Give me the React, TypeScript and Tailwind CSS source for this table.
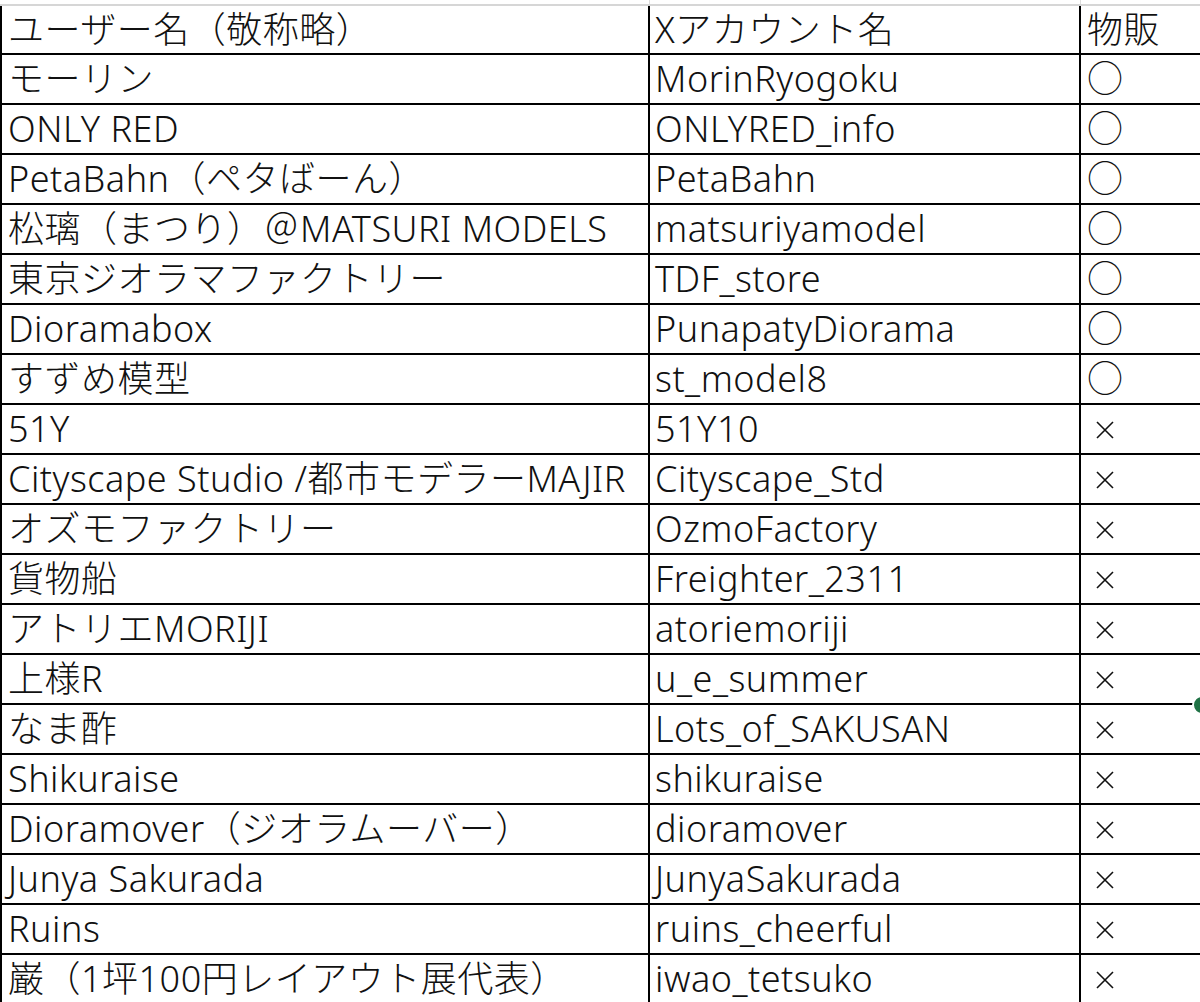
import React from "react";

const rows: [string, string, string][] = [
  ["モーリン", "MorinRyogoku", "○"],
  ["ONLY RED", "ONLYRED_info", "○"],
  ["PetaBahn（ペタばーん）", "PetaBahn", "○"],
  ["松璃（まつり）＠MATSURI MODELS", "matsuriyamodel", "○"],
  ["東京ジオラマファクトリー", "TDF_store", "○"],
  ["Dioramabox", "PunapatyDiorama", "○"],
  ["すずめ模型", "st_model8", "○"],
  ["51Y", "51Y10", "×"],
  ["Cityscape Studio /都市モデラーMAJIR", "Cityscape_Std", "×"],
  ["オズモファクトリー", "OzmoFactory", "×"],
  ["貨物船", "Freighter_2311", "×"],
  ["アトリエMORIJI", "atoriemoriji", "×"],
  ["上様R", "u_e_summer", "×"],
  ["なま酢", "Lots_of_SAKUSAN", "×"],
  ["Shikuraise", "shikuraise", "×"],
  ["Dioramover（ジオラムーバー）", "dioramover", "×"],
  ["Junya Sakurada", "JunyaSakurada", "×"],
  ["Ruins", "ruins_cheerful", "×"],
  ["巌（1坪100円レイアウト展代表）", "iwao_tetsuko", "×"],
];

function Cross() {
  return (
    <svg width="18" height="18" viewBox="0 0 18 18" className="ml-[9px] mt-[1px]">
      <path d="M1 1 L17 17 M17 1 L1 17" stroke="#111" strokeWidth="1.6" fill="none" />
    </svg>
  );
}

function Row({ a, b, c, header }: { a: string; b: string; c: string; header?: boolean }) {
  return (
    <div className={`flex border-b-2 border-black ${header ? "h-[49px]" : "h-[50px]"} shrink-0`}>
      <div className="w-[650px] shrink-0 border-l-2 border-r-2 border-black pl-[6px] flex items-center overflow-hidden whitespace-nowrap">
        {a}
      </div>
      <div className="w-[431px] shrink-0 border-r-2 border-black pl-[5px] flex items-center overflow-hidden whitespace-nowrap">
        {b}
      </div>
      <div className="flex-1 flex items-center overflow-hidden whitespace-nowrap pl-[6px]">
        {c === "×" ? <Cross /> : c}
      </div>
    </div>
  );
}

export default function App() {
  return (
    <div
      className="relative w-[1200px] h-[1002px] overflow-hidden bg-white text-[#111] text-[36px] font-light leading-none tracking-[0.5px]"
      style={{ fontFamily: '"Noto Sans", "Noto Sans CJK JP", sans-serif' }}
    >
      <div className="flex h-[4px]">
        <div className="w-[650px] border-r border-[#dcdcdc]" />
        <div className="w-[431px] border-r border-[#dcdcdc]" />
      </div>
      <div className="h-[2px] bg-[#d6d6d6]" />
      <div className="flex flex-col">
        <Row a="ユーザー名（敬称略）" b="Xアカウント名" c="物販" header />
        {rows.map(([a, b, c], i) => (
          <Row key={i} a={a} b={b} c={c} />
        ))}
      </div>
      <div className="absolute left-[1192px] top-[695px] w-[20px] h-[20px] rounded-full bg-[#217346] border-2 border-white" />
    </div>
  );
}
